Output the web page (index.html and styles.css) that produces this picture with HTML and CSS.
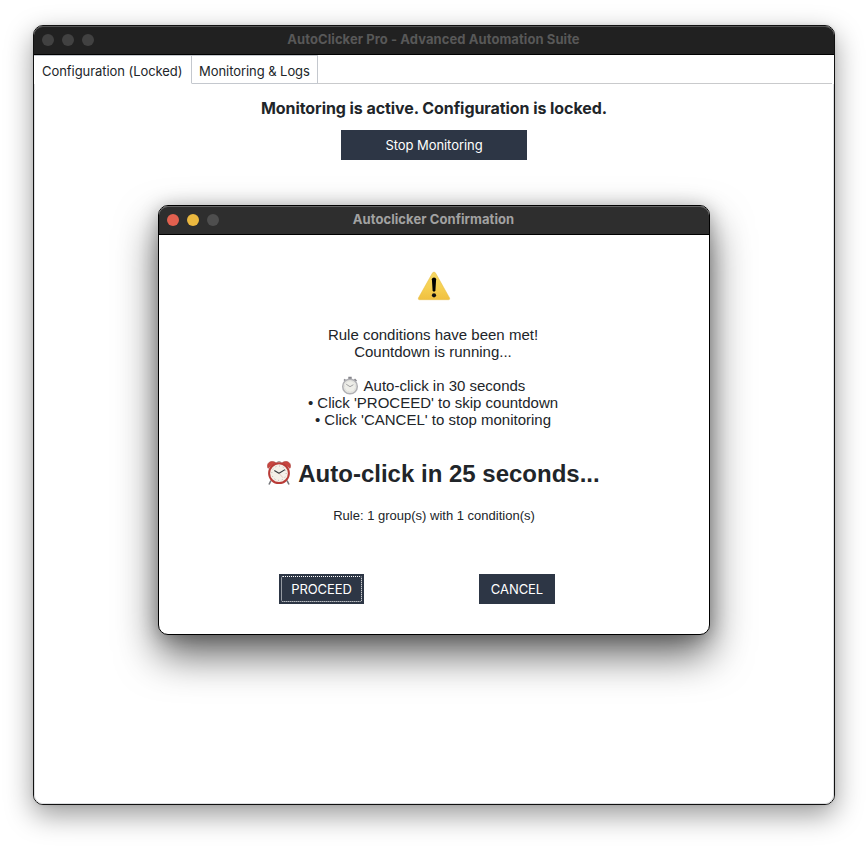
FILE: index.html
```html
<!DOCTYPE html>
<html lang="en">
<head>
<meta charset="utf-8">
<title>AutoClicker Pro</title>
<link rel="stylesheet" href="styles.css">
</head>
<body>
<main class="window main-window">
  <header class="titlebar">
    <div class="lights"><i></i><i></i><i></i></div>
    <h1 class="title">AutoClicker Pro - Advanced Automation Suite</h1>
  </header>
  <nav class="tabs">
    <div class="tab active">Configuration (Locked)</div>
    <div class="tab">Monitoring &amp; Logs</div>
    <div class="tab-fill"></div>
  </nav>
  <section class="panel">
    <h2 class="status">Monitoring is active. Configuration is locked.</h2>
    <button class="btn stop">Stop Monitoring</button>
  </section>
</main>
<section class="window dialog" role="dialog">
  <header class="titlebar">
    <div class="lights"><i class="red"></i><i class="yellow"></i><i></i></div>
    <h1 class="title">Autoclicker Confirmation</h1>
  </header>
  <div class="body">
    <svg class="warning" width="34" height="30" viewBox="0 0 34 30">
      <defs><linearGradient id="w" x1="0" y1="0" x2="0" y2="1"><stop offset="0" stop-color="#f5d765"/><stop offset=".55" stop-color="#f6d052"/><stop offset="1" stop-color="#f0c040"/></linearGradient></defs>
      <path d="M15.6 1.8Q17 .2 18.4 1.8L32.6 27Q33.2 28.6 31.6 28.7H2.4Q.8 28.6 1.4 27Z" fill="url(#w)" stroke="#e7bd43" stroke-width=".5"/>
      <path d="M14.9 8.2Q14.9 6.4 17 6.4T19.1 8.2L18.4 19.3Q18.2 20.7 17 20.7T15.6 19.3Z" fill="#000"/>
      <circle cx="17" cy="24.3" r="2.1" fill="#111"/>
    </svg>
    <div class="message">
      <p>Rule conditions have been met!</p>
      <p>Countdown is running...</p>
      <p class="timer">
        <svg width="18" height="19" viewBox="0 0 18 19">
          <path d="M7.3.8h3.4v2.5H7.3zM14 2.6l2 1.8-1.3 1.5-2-1.8zM2.5 4l1.3-1.2L5 4 3.6 5.3z" fill="#85858b"/>
          <circle cx="9" cy="10.5" r="7.3" fill="#e7e7e3" stroke="#b0b0b4" stroke-width="1.5"/>
          <circle cx="9" cy="10.5" r="5.4" fill="#eeeee9" stroke="#c9c9c7" stroke-width=".6" stroke-dasharray=".6 1"/>
          <path d="M9 10.7L5.2 8.2M9 10.7l3.4-2" stroke="#8b8b8f" stroke-width=".8"/>
        </svg>
        <span>Auto-click in 30 seconds</span>
      </p>
      <p>• Click 'PROCEED' to skip countdown</p>
      <p>• Click 'CANCEL' to stop monitoring</p>
    </div>
    <div class="countdown">
      <svg width="26" height="26" viewBox="0 0 26 26">
        <path d="M5 20.5L3 24.5M21 20.5l2 4" stroke="#737478" stroke-width="1.6"/>
        <path d="M2 8.3C-.2 3 5-.4 9.6 2.5zM24 8.3C26.2 3 21-.4 16.4 2.5z" fill="#c9453f" stroke="#a43531" stroke-width=".6"/>
        <path d="M10.5 2.5Q13 .8 15.5 2.5" fill="none" stroke="#87777a" stroke-width="1"/>
        <circle cx="13" cy="13.2" r="9.9" fill="#f4f0e9" stroke="#b93b37" stroke-width="2"/>
        <circle cx="13" cy="13.2" r="7.2" fill="none" stroke="#aaa49f" stroke-width="1" stroke-dasharray=".8 2.97"/>
        <path d="M8.3 10.6L13 13.3l6-3.7" fill="none" stroke="#34383c" stroke-width="1.1"/>
        <path d="M13 13.3l4 4.5" stroke="#d9a19b" stroke-width=".5"/>
      </svg>
      <strong>Auto-click in 25 seconds...</strong>
    </div>
    <p class="rule">Rule: 1 group(s) with 1 condition(s)</p>
    <div class="actions">
      <button class="btn proceed"><span>PROCEED</span></button>
      <button class="btn cancel">CANCEL</button>
    </div>
  </div>
</section>
</body>
</html>
```
FILE: styles.css
```css
* { box-sizing: border-box; }
body {
  margin: 0;
  width: 868px;
  height: 846px;
  padding: 25px 33px;
  overflow: hidden;
  background: #fff;
  color: #212529;
  font-family: Inter, "Liberation Sans", sans-serif;
}
h1, h2, p { margin: 0; }
.window {
  background: #fff;
  border: 1px solid #111;
  border-radius: 10px;
}
.main-window {
  width: 802px;
  height: 780px;
  box-shadow: 0 10px 28px rgba(0, 0, 0, .4), 0 0 4px rgba(0, 0, 0, .1);
}
.dialog {
  position: absolute;
  left: 158px;
  top: 205px;
  width: 552px;
  height: 430px;
  border-color: #000;
  box-shadow: 0 20px 40px rgba(0, 0, 0, .62), 0 2px 18px rgba(0, 0, 0, .25);
}
.titlebar {
  display: grid;
  grid-template-columns: 60px 1fr 60px;
  align-items: center;
  height: 29px;
  padding: 0 8px;
  background: #212121;
  border-bottom: 1px solid #000;
  border-radius: 9px 9px 0 0;
  box-shadow: inset 0 1px #555;
}
.dialog .titlebar { background: #2e2e2e; box-shadow: inset 0 1px #666; }
.lights { display: flex; gap: 8px; }
.lights i { width: 12px; height: 12px; border-radius: 50%; background: #414141; }
.dialog .lights i { background: #4e4e4e; }
.dialog .lights .red { background: #e2604f; }
.dialog .lights .yellow { background: #ebb83f; }
.title {
  padding: 0 1px 1px 0;
  text-align: center;
  white-space: nowrap;
  font-size: 13px;
  line-height: 15px;
  font-weight: 700;
  letter-spacing: .075px;
  color: #585858;
}
.dialog .title { color: #a2a2a2; }
.tabs {
  display: flex;
  height: 29px;
  font-size: 13px;
  line-height: 16px;
  letter-spacing: -.06px;
  white-space: nowrap;
}
.tab {
  width: 126px;
  padding: 7px 0 0 7px;
  border: solid #c4c8ce;
  border-width: 1px 1px 1px 0;
}
.tab.active { width: 158px; padding-left: 8px; border-bottom-color: transparent; }
.tab-fill { flex: 1; margin-right: 2px; border-bottom: 1px solid #c9cacc; }
.panel {
  display: flex;
  flex-direction: column;
  align-items: center;
  height: 720px;
  padding-top: 14px;
  border: solid #dedfe1;
  border-width: 0 1px 1px;
  border-radius: 0 0 9px 9px;
}
.status {
  font-size: 16px;
  line-height: 20px;
  font-weight: 700;
  letter-spacing: -.07px;
  white-space: nowrap;
}
.btn {
  height: 30px;
  padding: 0;
  border: 0;
  background: #2d3645;
  color: #fff;
  font: 13px/30px Inter, sans-serif;
  letter-spacing: -.06px;
}
.stop { width: 186px; margin-top: 12px; }
.body { display: flex; flex-direction: column; align-items: center; padding-top: 36px; }
.warning { display: block; }
.message {
  margin-top: 25px;
  padding-right: 2px;
  text-align: center;
  white-space: nowrap;
  font: 15px/17px "Liberation Sans", sans-serif;
}
.timer { display: flex; align-items: center; justify-content: center; gap: 5px; height: 17px; margin-top: 17px; }
.countdown {
  display: flex;
  align-items: center;
  gap: 6px;
  height: 28px;
  margin-top: 32px;
  padding-right: 2px;
  white-space: nowrap;
  font: 24px/28px "Liberation Sans", sans-serif;
}
.countdown svg { margin-top: -2px; }
.rule { margin-top: 20px; font: 13px/16px "Liberation Sans", sans-serif; }
.actions { display: flex; width: 276px; justify-content: space-between; margin: 50px 34px 0 0; }
.proceed { width: 85px; padding: 2px; }
.proceed span { display: block; height: 26px; line-height: 24px; border: 1px dotted #fff; border-radius: 2px; }
.cancel { width: 76px; }
```
